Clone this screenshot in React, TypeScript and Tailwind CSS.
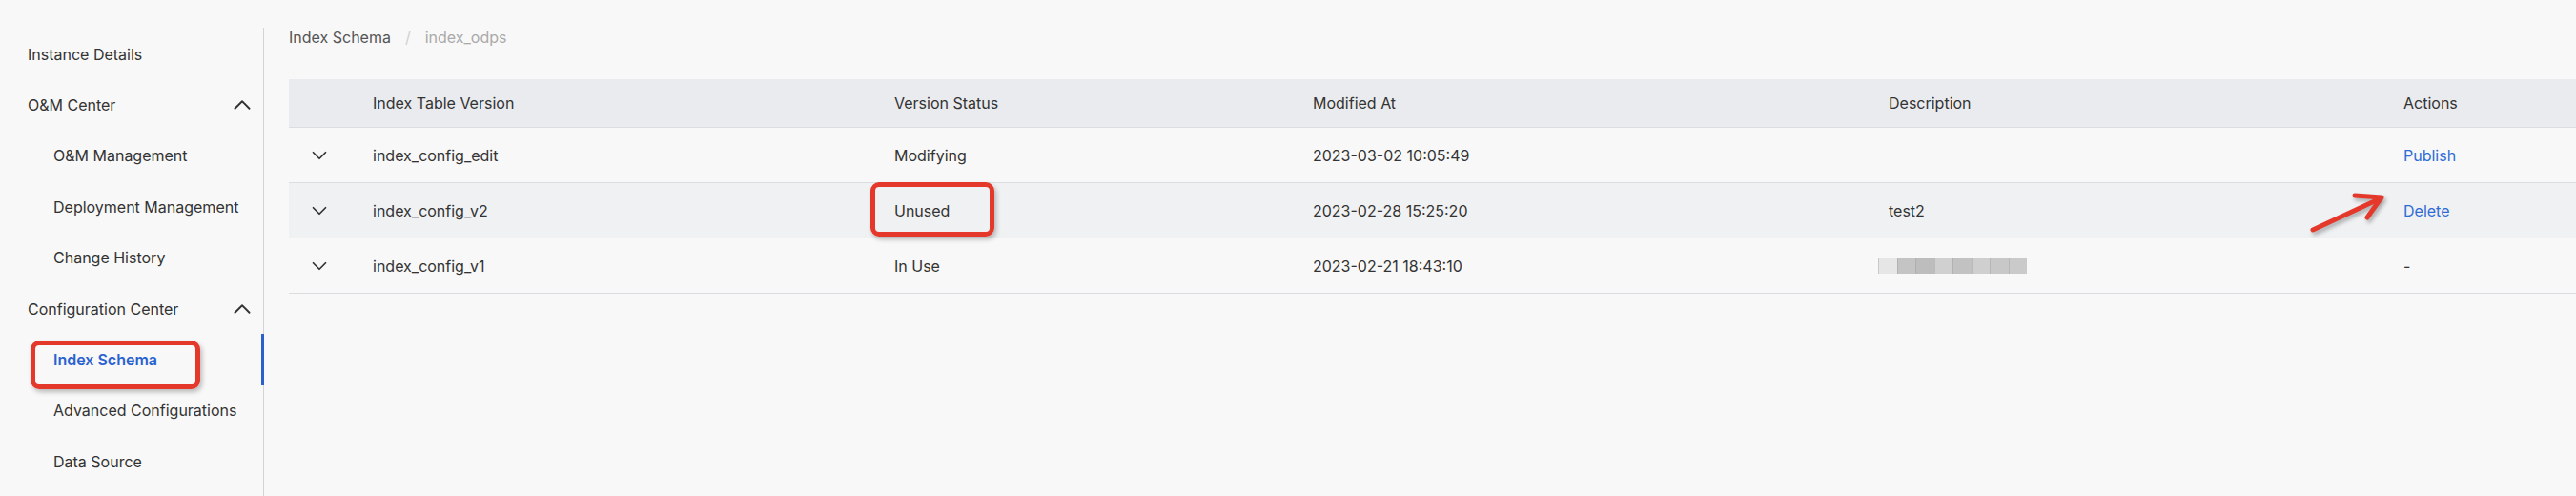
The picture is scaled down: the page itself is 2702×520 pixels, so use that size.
import { ChevronDown, ChevronUp } from "lucide-react";

type Row = {
  name: string;
  status: string;
  modified: string;
  desc: string;
  action: string;
  hover?: boolean;
};

const rows: Row[] = [
  { name: "index_config_edit", status: "Modifying", modified: "2023-03-02 10:05:49", desc: "", action: "Publish" },
  { name: "index_config_v2", status: "Unused", modified: "2023-02-28 15:25:20", desc: "test2", action: "Delete", hover: true },
  { name: "index_config_v1", status: "In Use", modified: "2023-02-21 18:43:10", desc: "blur", action: "-" },
];

const cols = "grid grid-cols-[88px_547px_439px_604px_540px_1fr] items-center";

function NavGroup({ label }: { label: string }) {
  return (
    <div className="h-[53.4px] flex items-center justify-between pl-[29px] pr-[7px]">
      <span>{label}</span>
      <ChevronUp size={30} strokeWidth={1.5} className="text-[#333]" />
    </div>
  );
}

function NavItem({ label, active }: { label: string; active?: boolean }) {
  return (
    <div className="relative h-[53.4px] flex items-center pl-[56px]">
      <span className={active ? "font-semibold text-[#2a62d0]" : ""}>{label}</span>
      {active && (
        <>
          <div className="absolute left-[32px] top-[7px] w-[178px] h-[51px] rounded-[9px] border-[5px] border-[#e4382a] shadow-[2px_3px_5px_rgba(0,0,0,0.25)]" />
          <div className="absolute right-[-1px] top-0 h-full w-[3px] bg-[#2a5fcc]" />
        </>
      )}
    </div>
  );
}

function Blurred() {
  const shades = ["#e6e6e6", "#c4c4c4", "#bdbdbd", "#d0d0d0", "#c2c2c2", "#cfcfcf", "#c8c8c8", "#cacaca"];
  return (
    <div className="-ml-[11px] flex h-[17px] blur-[0.6px]">
      {shades.map((c, i) => (
        <div key={i} className="w-[19.5px] h-full border-l border-[#9a9a9a]/40" style={{ background: c }} />
      ))}
    </div>
  );
}

export default function App() {
  return (
    <div className="w-[2702px] h-[520px] overflow-hidden bg-[#f8f8f8] text-[16px] text-[#333] font-['Inter',sans-serif]">
      <div className="h-[29px]" />
      <div className="flex h-[491px]">
        <aside className="w-[277px] shrink-0 border-r border-[#d2d4d8] pt-px">
          <div className="h-[53.4px] flex items-center pl-[29px]">Instance Details</div>
          <NavGroup label="O&M Center" />
          <NavItem label="O&M Management" />
          <NavItem label="Deployment Management" />
          <NavItem label="Change History" />
          <NavGroup label="Configuration Center" />
          <NavItem label="Index Schema" active />
          <NavItem label="Advanced Configurations" />
          <NavItem label="Data Source" />
        </aside>

        <main className="flex-1 pl-[26px]">
          <div className="h-[20px] flex items-center">
            <span className="text-[#555]">Index Schema</span>
            <span className="ml-[15px] text-[#d0d0d0]">/</span>
            <span className="ml-[15px] text-[#aaa]">index_odps</span>
          </div>

          <div className="mt-[34px]">
            <div className={`${cols} h-[51px] bg-[#eaebee] border-b border-[#dcdde1]`}>
              <div />
              <div>Index Table Version</div>
              <div>Version Status</div>
              <div>Modified At</div>
              <div>Description</div>
              <div>Actions</div>
            </div>
            {rows.map((r) => (
              <div
                key={r.name}
                className={`${cols} h-[58px] border-b border-[#dcdde1] ${r.hover ? "bg-[#f0f1f3]" : ""}`}
              >
                <div className="pl-[19px]">
                  <ChevronDown size={26} strokeWidth={1.6} className="text-[#333]" />
                </div>
                <div>{r.name}</div>
                <div className="relative">
                  {r.status}
                  {r.status === "Unused" && (
                    <div className="absolute left-[-25px] top-[-18px] w-[130px] h-[57px] rounded-[9px] border-[5px] border-[#e4382a] shadow-[2px_3px_5px_rgba(0,0,0,0.25)]" />
                  )}
                </div>
                <div>{r.modified}</div>
                <div>{r.desc === "blur" ? <Blurred /> : r.desc}</div>
                <div className="relative">
                  <span className={r.action === "-" ? "" : "text-[#2f6cd5]"}>{r.action}</span>
                  {r.action === "Delete" && (
                    <svg
                      width="100"
                      height="50"
                      viewBox="0 0 100 50"
                      className="absolute left-[-108px] top-[-7px] drop-shadow-[2px_3px_2px_rgba(0,0,0,0.3)]"
                    >
                      <g stroke="#e4382a" strokeWidth="5" strokeLinecap="round" strokeLinejoin="round" fill="none">
                        <line x1="13" y1="39" x2="84" y2="6" />
                        <polyline points="57,3 85,5 70,26" />
                      </g>
                    </svg>
                  )}
                </div>
              </div>
            ))}
          </div>
        </main>
      </div>
    </div>
  );
}
